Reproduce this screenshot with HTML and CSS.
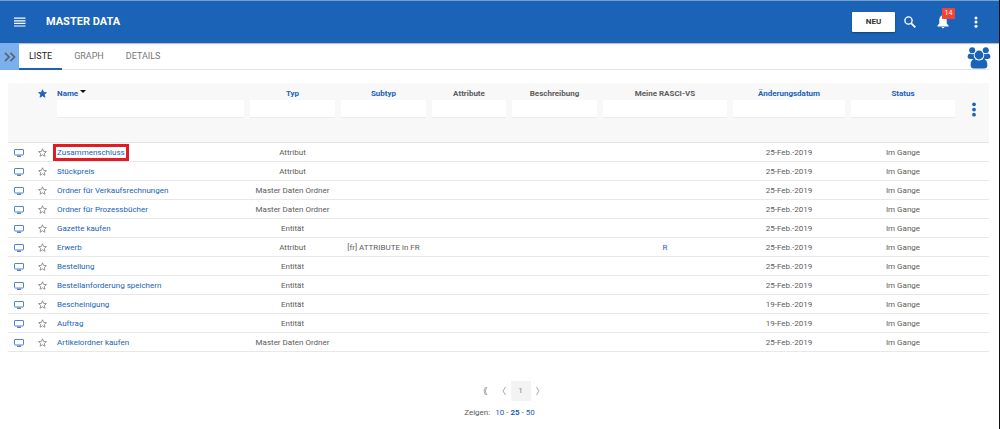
FILE: index.html
```html
<!DOCTYPE html>
<html lang="de">
<head>
    <meta charset="UTF-8">
    <meta name="viewport" content="width=device-width, initial-scale=1.0">
    <title>Master Data</title>
    <link rel="stylesheet" href="styles.css">
</head>
<body>
    <!-- Shared icons -->
    <svg class="sprite" aria-hidden="true">
        <symbol id="star" viewBox="0 0 24 24"><path d="M12 2l3 7 7.500 .6-5.700 5 1.800 7.400-6.600-4-6.600 4 1.800-7.400-5.700-5L9 9z"/></symbol>
        <symbol id="monitor" viewBox="0 0 12 10"><path d="M2 1.500h8a.5.5 0 0 1 .5.5v4.500a.5.5 0 0 1-.5.5H2a.5.5 0 0 1-.5-.5V2a.5.5 0 0 1 .5-.5z" fill="none" stroke="currentColor"/><path d="M4 7.500h4V9H4z" fill="currentColor"/></symbol>
        <symbol id="dots" viewBox="0 0 4 16"><circle cx="2" cy="2.500" r="2"/><circle cx="2" cy="8" r="2"/><circle cx="2" cy="13.500" r="2"/></symbol>
    </svg>

    <header class="topbar">
        <button class="icon-btn" aria-label="Menü">
            <svg width="12" height="10" viewBox="0 0 12 10"><path d="M0 1.200h11.500M0 3.800h11.500M0 6.400h11.500M0 9h11.500" stroke="currentColor" stroke-width="1.200"/></svg>
        </button>
        <h1>MASTER DATA</h1>
        <div class="actions">
            <button class="new-btn">NEU</button>
            <button class="icon-btn" aria-label="Suchen">
                <svg width="12" height="12" viewBox="0 0 12 12" fill="none" stroke="currentColor"><circle cx="4.500" cy="4.500" r="3.600" stroke-width="1.400"/><path d="M7.300 7.300l4 4" stroke-width="1.800"/></svg>
            </button>
            <button class="icon-btn bell" aria-label="Benachrichtigungen">
                <svg width="12" height="14" viewBox="0 0 12 14" fill="currentColor"><path d="M6 0C3.200 .8 2.300 3 2.300 5v3.500L.5 10.500v1h11v-1L9.700 8.500V5C9.700 3 8.800 .8 6 0zM4.700 12h2.600a1.300 1.300 0 0 1-2.600 0z"/></svg>
                <span class="badge">14</span>
            </button>
            <button class="icon-btn" aria-label="Mehr"><svg class="dots-small"><use href="#dots"/></svg></button>
        </div>
    </header>

    <nav class="tabs">
        <button class="expand" aria-label="Seitenleiste öffnen">
            <svg width="12" height="10" viewBox="0 0 12 10" fill="none" stroke="currentColor" stroke-width="1.800"><path d="M1 .8L5 5 1 9.200M6.500 .8l4 4.200-4 4.200"/></svg>
        </button>
        <a href="#" class="tab active">LISTE</a>
        <a href="#" class="tab">GRAPH</a>
        <a href="#" class="tab">DETAILS</a>
        <button class="people" aria-label="Benutzer">
            <svg width="24" height="22" viewBox="0 0 24 22" fill="currentColor"><circle cx="5.200" cy="3.200" r="3"/><circle cx="18.800" cy="3.200" r="3"/><path d="M3 6.500c1.500 1 3 1 4 .3-.7 2.500.2 4.300 1.300 5.200H3.500C1.300 12 .5 11 .6 9.500.8 8 1.500 6.800 3 6.500zM21 6.500c-1.500 1-3 1-4 .3.7 2.500-.2 4.300-1.300 5.200h4.800c2.200 0 3-1 2.900-2.500C23.200 8 22.500 6.800 21 6.500z"/><circle cx="12" cy="8" r="4.400"/><path d="M7.500 11.800c2.500 2.200 6.500 2.200 9 0 2.800.6 3.900 3.200 3.900 6.200 0 2.300-1.200 3.600-3.200 3.600H6.800c-2 0-3.200-1.300-3.200-3.600 0-3 1.100-5.600 3.900-6.200z"/></svg>
        </button>
    </nav>

    <main>
        <table>
            <colgroup>
                <col class="col-type"><col class="col-star"><col>
                <col class="col-m"><col class="col-m"><col class="col-s"><col class="col-m">
                <col class="col-xl"><col class="col-l"><col class="col-status"><col class="col-menu">
            </colgroup>
            <thead>
                <tr>
                    <th></th>
                    <th><svg class="star filled"><use href="#star"/></svg></th>
                    <th class="name"><a href="#">Name <span class="sort"></span></a><input type="text" aria-label="Name filtern"></th>
                    <th><a href="#">Typ</a><input type="text" aria-label="Typ filtern"></th>
                    <th><a href="#">Subtyp</a><input type="text" aria-label="Subtyp filtern"></th>
                    <th><span>Attribute</span><input type="text" aria-label="Attribute filtern"></th>
                    <th><span>Beschreibung</span><input type="text" aria-label="Beschreibung filtern"></th>
                    <th><span>Meine RASCI-VS</span><input type="text" aria-label="Meine RASCI-VS filtern"></th>
                    <th><a href="#">Änderungsdatum</a><input type="text" aria-label="Änderungsdatum filtern"></th>
                    <th><a href="#">Status</a><input type="text" aria-label="Status filtern"></th>
                    <th class="menu"><button aria-label="Spalten"><svg class="dots-large"><use href="#dots"/></svg></button></th>
                </tr>
            </thead>
            <tbody>
                <tr><td><svg class="monitor"><use href="#monitor"/></svg></td><td><svg class="star"><use href="#star"/></svg></td><td class="name"><a href="#" class="marked">Zusammenschluss</a></td><td>Attribut</td><td></td><td></td><td></td><td></td><td>25-Feb.-2019</td><td>Im Gange</td><td></td></tr>
                <tr><td><svg class="monitor"><use href="#monitor"/></svg></td><td><svg class="star"><use href="#star"/></svg></td><td class="name"><a href="#">Stückpreis</a></td><td>Attribut</td><td></td><td></td><td></td><td></td><td>25-Feb.-2019</td><td>Im Gange</td><td></td></tr>
                <tr><td><svg class="monitor"><use href="#monitor"/></svg></td><td><svg class="star"><use href="#star"/></svg></td><td class="name"><a href="#">Ordner für Verkaufsrechnungen</a></td><td>Master Daten Ordner</td><td></td><td></td><td></td><td></td><td>25-Feb.-2019</td><td>Im Gange</td><td></td></tr>
                <tr><td><svg class="monitor"><use href="#monitor"/></svg></td><td><svg class="star"><use href="#star"/></svg></td><td class="name"><a href="#">Ordner für Prozessbücher</a></td><td>Master Daten Ordner</td><td></td><td></td><td></td><td></td><td>25-Feb.-2019</td><td>Im Gange</td><td></td></tr>
                <tr><td><svg class="monitor"><use href="#monitor"/></svg></td><td><svg class="star"><use href="#star"/></svg></td><td class="name"><a href="#">Gazette kaufen</a></td><td>Entität</td><td></td><td></td><td></td><td></td><td>25-Feb.-2019</td><td>Im Gange</td><td></td></tr>
                <tr><td><svg class="monitor"><use href="#monitor"/></svg></td><td><svg class="star"><use href="#star"/></svg></td><td class="name"><a href="#">Erwerb</a></td><td>Attribut</td><td>[fr] ATTRIBUTE in FR</td><td></td><td></td><td><a href="#">R</a></td><td>25-Feb.-2019</td><td>Im Gange</td><td></td></tr>
                <tr><td><svg class="monitor"><use href="#monitor"/></svg></td><td><svg class="star"><use href="#star"/></svg></td><td class="name"><a href="#">Bestellung</a></td><td>Entität</td><td></td><td></td><td></td><td></td><td>25-Feb.-2019</td><td>Im Gange</td><td></td></tr>
                <tr><td><svg class="monitor"><use href="#monitor"/></svg></td><td><svg class="star"><use href="#star"/></svg></td><td class="name"><a href="#">Bestellanforderung speichern</a></td><td>Entität</td><td></td><td></td><td></td><td></td><td>25-Feb.-2019</td><td>Im Gange</td><td></td></tr>
                <tr><td><svg class="monitor"><use href="#monitor"/></svg></td><td><svg class="star"><use href="#star"/></svg></td><td class="name"><a href="#">Bescheinigung</a></td><td>Entität</td><td></td><td></td><td></td><td></td><td>19-Feb.-2019</td><td>Im Gange</td><td></td></tr>
                <tr><td><svg class="monitor"><use href="#monitor"/></svg></td><td><svg class="star"><use href="#star"/></svg></td><td class="name"><a href="#">Auftrag</a></td><td>Entität</td><td></td><td></td><td></td><td></td><td>19-Feb.-2019</td><td>Im Gange</td><td></td></tr>
                <tr><td><svg class="monitor"><use href="#monitor"/></svg></td><td><svg class="star"><use href="#star"/></svg></td><td class="name"><a href="#">Artikelordner kaufen</a></td><td>Master Daten Ordner</td><td></td><td></td><td></td><td></td><td>25-Feb.-2019</td><td>Im Gange</td><td></td></tr>
            </tbody>
        </table>
    </main>

    <footer>
        <div class="pager">
            <button class="first" aria-label="Erste Seite"><svg width="6" height="10" viewBox="0 0 6 10"><path d="M3.500 1L2 5l1.500 4M4.800 1L3.300 5l1.500 4"/></svg></button>
            <button aria-label="Vorherige Seite"><svg width="6" height="10" viewBox="0 0 6 10"><path d="M4.500 1L2 5l2.500 4"/></svg></button>
            <button class="current">1</button>
            <button aria-label="Nächste Seite"><svg width="6" height="10" viewBox="0 0 6 10"><path d="M1.500 1L4 5 1.500 9"/></svg></button>
        </div>
        <div class="sizes"><span class="label">Zeigen:</span><a href="#">10</a> - <a href="#"><b>25</b></a> - <a href="#">50</a></div>
    </footer>
</body>
</html>
```
FILE: styles.css
```css
* {
    box-sizing: border-box;
}
html {
    min-height: 100%;
    border-right: 1px solid #111;
    background-color: #fff;
}
body {
    margin: 0;
    font-family: Roboto, sans-serif;
    font-size: 8px;
    line-height: 12px;
    color: #5c5c5c;
}
a {
    color: #1a63b7;
    text-decoration: none;
}
button {
    display: flex;
    align-items: center;
    justify-content: center;
    padding: 0;
    border: none;
    background: none;
    font: inherit;
    color: inherit;
    cursor: pointer;
}
.sprite {
    display: none;
}

/* Top bar */
.topbar {
    display: flex;
    align-items: center;
    height: 43px;
    padding: 0 13px 0 10px;
    background-color: #1a63b7;
    border-top: 1px solid #7b9fcb;
    box-shadow: 0 1px 1px rgba(0,0,0,0.25);
    color: #fff;
}
.topbar h1 {
    margin: 0 0 0 16px;
    font-size: 11px;
    font-weight: 700;
}
.icon-btn {
    width: 20px;
    height: 20px;
}
.actions {
    display: flex;
    align-items: center;
    gap: 13px;
    margin-left: auto;
}
.new-btn {
    width: 43px;
    height: 20px;
    margin-right: -8px;
    background-color: #fff;
    border-radius: 1px;
    box-shadow: 0 1px 2px rgba(0,0,0,0.35);
    color: #333;
    font-weight: 700;
}
.bell {
    position: relative;
}
.badge {
    position: absolute;
    top: -4px;
    right: -2px;
    width: 13px;
    height: 11px;
    background-color: #f44336;
    border-radius: 1px;
    font-size: 7px;
    line-height: 11px;
}
.dots-small {
    width: 4px;
    height: 12px;
    fill: currentColor;
}

/* Tabs */
.tabs {
    display: flex;
    height: 27px;
    margin-right: 10px;
    border-bottom: 1px solid #e6e6e6;
}
.expand {
    width: 19px;
    height: 27px;
    background-color: #7cb0ec;
    color: #5a6674;
}
.tab {
    height: 27px;
    padding: 0 10px;
    border-bottom: 2px solid transparent;
    font-size: 9px;
    line-height: 27px;
    color: #777;
}
.tab + .tab {
    margin-left: 2px;
}
.tab.active {
    border-bottom-color: #1a63b7;
    color: #222;
}
.people {
    width: 24px;
    height: 26px;
    margin: 2px -2px 0 auto;
    color: #1a63b7;
}

/* List */
main {
    padding: 13px 10px 0 8px;
}
table {
    width: 100%;
    table-layout: fixed;
    border-collapse: separate;
    border-spacing: 0;
}
.col-type { width: 22px; }
.col-star { width: 24px; }
.col-s { width: 80px; }
.col-m { width: 91px; }
.col-l { width: 118px; }
.col-xl { width: 130px; }
.col-status { width: 110px; }
.col-menu { width: 31px; }
th {
    height: 60px;
    padding: 5px 3px 0;
    background-color: #f8f8f8;
    border-bottom: 1px solid #e4e4e4;
    vertical-align: top;
}
th input {
    display: block;
    width: 100%;
    height: 18px;
    padding: 0 4px;
    border: none;
    border-bottom: 1px solid #ececec;
    background-color: #fff;
    font: inherit;
}
td {
    height: 19px;
    padding: 1px 0 0;
    border-bottom: 1px solid #e8e8e8;
    text-align: center;
    white-space: nowrap;
}
.name {
    padding-left: 3px;
    text-align: left;
}
td svg,
th svg {
    display: block;
    margin: 0 auto;
}
.monitor {
    width: 12px;
    height: 10px;
    color: #5285ca;
}
.star {
    width: 9px;
    height: 9px;
    fill: none;
    stroke: #777;
    stroke-width: 2;
}
.star.filled {
    margin-top: 1px;
    fill: #1a63b7;
    stroke: #1a63b7;
}
.sort {
    display: inline-block;
    border: 3px solid transparent;
    border-top-color: #111;
    border-bottom: none;
    vertical-align: 3px;
}
.menu {
    padding-top: 19px;
}
.menu button {
    width: 100%;
}
.dots-large {
    width: 4px;
    height: 15px;
    fill: #1a63b7;
}
.marked {
    outline: 3px solid #e31b23;
    outline-offset: 1px;
}

/* Paging */
footer {
    display: flex;
    flex-direction: column;
    align-items: center;
    gap: 6px;
    padding-top: 29px;
}
.pager {
    display: flex;
    margin-left: 18px;
}
.pager button {
    width: 14px;
    height: 20px;
    color: #888;
}
.pager .first {
    width: 24px;
}
.pager .current {
    width: 20px;
    background-color: #f3f3f3;
}
.pager svg {
    fill: none;
    stroke: #aaa;
}
.label {
    margin-right: 5px;
}
```
